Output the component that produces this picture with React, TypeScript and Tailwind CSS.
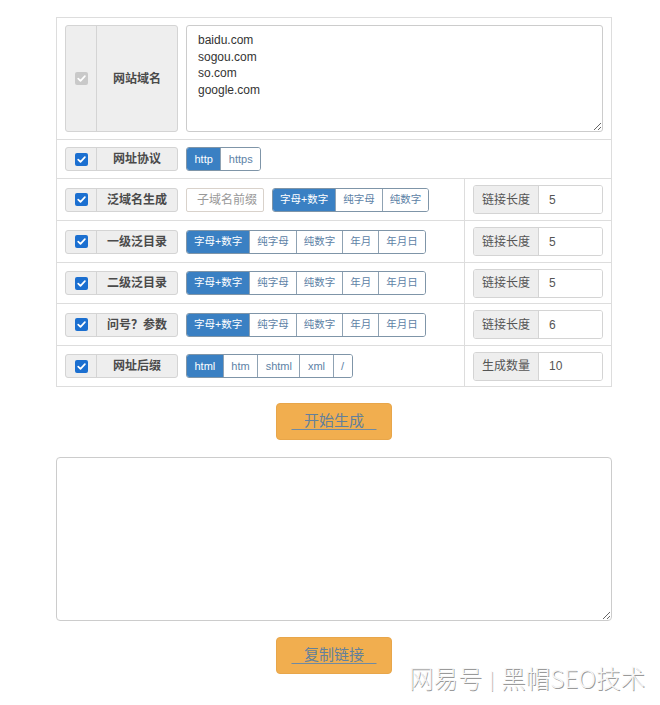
import React from "react";

const FONT = '"Liberation Sans", Arial, "Noto Sans CJK SC", sans-serif';

function Check({ disabled }: { disabled?: boolean }) {
  return (
    <span
      className={
        "flex h-[13px] w-[13px] items-center justify-center rounded-[2px] " +
        (disabled ? "bg-[#c9c9c9]" : "bg-[#1b6fd0]")
      }
    >
      <svg width="11" height="11" viewBox="0 0 11 11">
        <path d="M2.2 5.6 L4.5 7.9 L8.9 3.2" fill="none" stroke="#fff" strokeWidth="1.7" strokeLinecap="round" strokeLinejoin="round" />
      </svg>
    </span>
  );
}

function LabelGroup({ label, disabled, tall }: { label: string; disabled?: boolean; tall?: boolean }) {
  return (
    <div
      className={
        "flex w-[113px] shrink-0 rounded-[3px] border border-[#d4d4d4] bg-[#eeeeee] " +
        (tall ? "h-[107px]" : "h-[24px]")
      }
    >
      <div className="flex w-[31px] items-center justify-center border-r border-[#d4d4d4]">
        <Check disabled={disabled} />
      </div>
      <div className="flex flex-1 items-center justify-center text-[12px] font-bold text-[#4a4a4a]">{label}</div>
    </div>
  );
}

function BtnGroup({ items, cjk }: { items: string[]; cjk?: boolean }) {
  return (
    <div className="flex h-[24px] overflow-hidden rounded-[3px] border border-[#7f95a8]">
      {items.map((t, i) => (
        <div
          key={t}
          className={
            "flex items-center " +
            (cjk ? "px-[7px] text-[10.5px] " : "px-[7.5px] text-[11px] ") +
            (i > 0 ? "border-l border-[#8fa2b3] " : "") +
            (i === 0 ? "bg-[#3a80c3] text-white" : "bg-white text-[#5d82a6]")
          }
        >
          {t}
        </div>
      ))}
    </div>
  );
}

function RightGroup({ label, value }: { label: string; value: string }) {
  return (
    <div className="flex h-[29px] w-[130px] overflow-hidden rounded-[3px] border border-[#d4d4d4]">
      <div className="flex w-[65px] items-center justify-center border-r border-[#d4d4d4] bg-[#eeeeee] text-[12px] text-[#555]">
        {label}
      </div>
      <div className="flex flex-1 items-center bg-white pl-[10px] text-[12px] text-[#555]">{value}</div>
    </div>
  );
}

function Row({
  label,
  children,
  right,
  short,
}: {
  label: string;
  children: React.ReactNode;
  right?: React.ReactNode;
  short?: boolean;
}) {
  return (
    <div className={"flex border-t border-[#dddddd] " + (short ? "h-[41px]" : "h-[42px]")}>
      <div className="flex w-[409px] items-center gap-[8px] px-[8px]">
        <LabelGroup label={label} />
        {children}
      </div>
      <div className="flex flex-1 items-center border-l border-[#dddddd] px-[8px]">{right}</div>
    </div>
  );
}

function OrangeButton({ text }: { text: string }) {
  return (
    <div className="flex justify-center">
      <div className="flex h-[37px] w-[116px] items-center justify-center rounded-[4px] border border-[#e8a64a] bg-[#f1ae4f]">
        <span className="text-[15px] text-[#62809c] underline decoration-[#6f8aa2] underline-offset-[3px]">
          {"\u00a0\u00a0\u00a0" + text + "\u00a0\u00a0\u00a0"}
        </span>
      </div>
    </div>
  );
}

export default function App() {
  const cjk5 = ["字母+数字", "纯字母", "纯数字", "年月", "年月日"];
  return (
    <div className="relative h-[705px] w-[660px] overflow-hidden bg-white" style={{ fontFamily: FONT }}>
      <div className="ml-[56px] w-[556px] pt-[17px]">
        <div className="border border-[#dddddd]">
          <div className="flex h-[121px] items-center gap-[8px] px-[8px]">
            <LabelGroup label="网站域名" disabled tall />
            <textarea
              readOnly
              className="h-[107px] flex-1 rounded-[3px] border border-[#cccccc] px-[11px] py-[6px] text-[12px] leading-[16.5px] text-[#333] outline-none"
              style={{ fontFamily: FONT }}
              defaultValue={"baidu.com\nsogou.com\nso.com\ngoogle.com"}
            />
          </div>
          <div className="flex h-[39px] items-center gap-[8px] border-t border-[#dddddd] px-[8px]">
            <LabelGroup label="网址协议" />
            <BtnGroup items={["http", "https"]} />
          </div>
          <Row label="泛域名生成" right={<RightGroup label="链接长度" value="5" />}>
            <div className="flex h-[24px] w-[78px] items-center rounded-[2px] border border-[#d9d2cb] pl-[10px] text-[12px] text-[#999]">
              子域名前缀
            </div>
            <BtnGroup items={["字母+数字", "纯字母", "纯数字"]} cjk />
          </Row>
          <Row label="一级泛目录" right={<RightGroup label="链接长度" value="5" />}>
            <BtnGroup items={cjk5} cjk />
          </Row>
          <Row label="二级泛目录" short right={<RightGroup label="链接长度" value="5" />}>
            <BtnGroup items={cjk5} cjk />
          </Row>
          <Row label="问号？参数" right={<RightGroup label="链接长度" value="6" />}>
            <BtnGroup items={cjk5} cjk />
          </Row>
          <Row label="网址后缀" short right={<RightGroup label="生成数量" value="10" />}>
            <BtnGroup items={["html", "htm", "shtml", "xml", "/"]} />
          </Row>
        </div>
        <div className="mt-[16px]">
          <OrangeButton text="开始生成" />
        </div>
        <textarea
          readOnly
          className="mt-[17px] block h-[164px] w-[556px] rounded-[4px] border border-[#cccccc] outline-none"
        />
        <div className="mt-[16px]">
          <OrangeButton text="复制链接" />
        </div>
      </div>
      <div
        className="absolute left-[409px] top-[663px] flex items-center text-[24.5px] leading-[30px] text-[#f6f6f6] [text-shadow:0.8px_0.8px_0.6px_#9a9a9a]"
        style={{ fontFamily: '"Noto Sans CJK SC", sans-serif', fontWeight: 300 }}
      >
        <span>网易号</span>
        <span className="mx-[7px] text-[18px]">|</span>
        <span>黑帽SEO技术</span>
      </div>
    </div>
  );
}
